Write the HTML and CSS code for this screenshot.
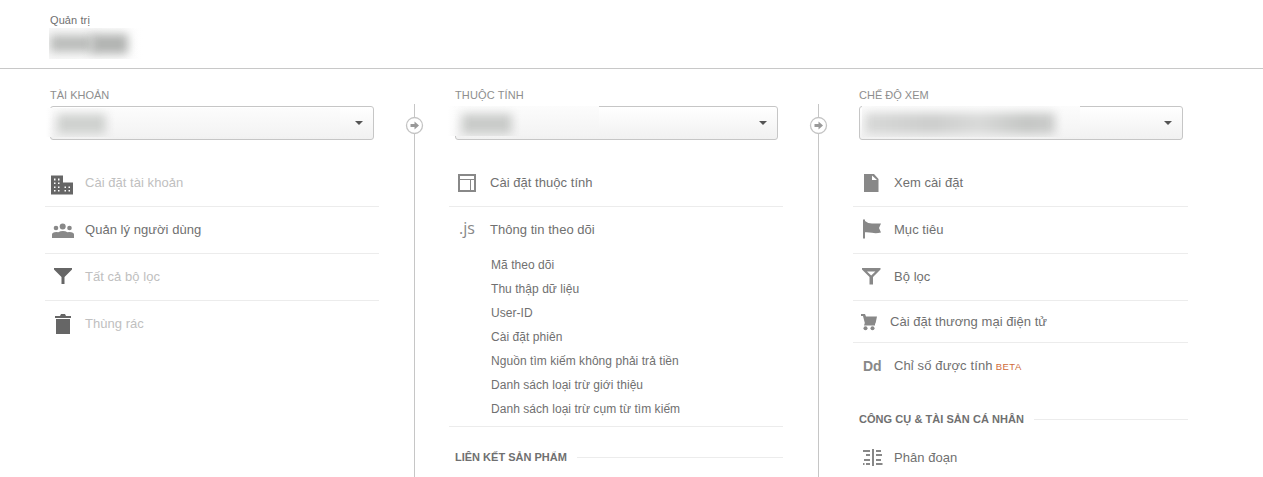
FILE: index.html
```html
<!DOCTYPE html>
<html lang="vi">
<head>
<meta charset="utf-8">
<title>Quản trị</title>
<link rel="stylesheet" href="styles.css">
</head>
<body>
<header class="top">
  <div class="crumb">Quản trị</div>
  <div class="redact redact-title"><i></i><b></b></div>
</header>
<main class="columns">
  <section class="col">
    <h2 class="label">TÀI KHOẢN</h2>
    <div class="select"><div class="redact redact-account"><i></i></div><span class="caret"></span></div>
    <ul class="rows">
      <li class="row off"><svg class="icon" viewBox="0 -1.500 24 24"><path fill="#666" fill-rule="evenodd" d="M1 3h12v7h10v12H1zM4 6v2h1.500V6zM8 6v2h1.500V6zM4 10v1.500h1.500V10zM8 10v1.500h1.500V10zM4 14v1.500h1.500V14zM8 14v1.500h1.500V14zM4 17.500v1.500h1.500v-1.500zM8 17.500v1.500h1.500v-1.500zM14.500 14v1.500H16V14zM18.500 14v1.500H20V14zM14.500 17.500v1.500H16v-1.500zM18.500 17.500v1.500H20v-1.500z"/></svg><span>Cài đặt tài khoản</span></li>
      <li class="row"><svg class="icon" viewBox="0 -1 24 24" fill="#888"><circle cx="6" cy="9" r="2.300"/><circle cx="12.700" cy="7.500" r="3"/><circle cx="19.500" cy="9" r="2.300"/><path d="M2 19v-3.500q0-2.500 4.500-2.500 1 0 1.800.3 2-1.300 4.600-1.300t4.600 1.300q.8-.3 1.800-.3 4.700 0 4.700 2.500V19z"/></svg><span>Quản lý người dùng</span></li>
      <li class="row off"><svg class="icon" viewBox="0 1 24 24" fill="#666"><path d="M4 4h18v1.500L14.500 13v7h-3v-7L4 5.500z"/></svg><span>Tất cả bộ lọc</span></li>
      <li class="row off"><svg class="icon" viewBox="0 0 24 24" fill="#666"><path d="M5 4h5l1-2h4l1 2h5v2H5zM6 7h14v15H6z"/></svg><span>Thùng rác</span></li>
    </ul>
  </section>
  <div class="divider"><svg class="go" viewBox="0 0 19 19"><circle cx="9.500" cy="9.500" r="8" fill="#fff" stroke="#c4c4c4" stroke-width="1.300"/><path fill="#999" d="M5.500 8h4V5.500l4.500 4-4.500 4V11h-4z"/></svg></div>
  <section class="col">
    <h2 class="label wide">THUỘC TÍNH</h2>
    <div class="select"><div class="redact redact-property"><i></i></div><span class="caret"></span></div>
    <ul class="rows">
      <li class="row"><svg class="icon" viewBox="0 0 24 24" fill="none" stroke="#888"><path stroke-width="2" d="M5 4h16v16H5z"/><path d="M6 8.500h14M16.500 9v10"/></svg><span>Cài đặt thuộc tính</span></li>
      <li class="row open"><span class="icon js">.js</span><span>Thông tin theo dõi</span></li>
    </ul>
    <ul class="sub">
      <li>Mã theo dõi</li><li>Thu thập dữ liệu</li><li>User-ID</li><li>Cài đặt phiên</li><li>Nguồn tìm kiếm không phải trả tiền</li><li>Danh sách loại trừ giới thiệu</li><li>Danh sách loại trừ cụm từ tìm kiếm</li>
    </ul>
    <h3 class="group group-links">LIÊN KẾT SẢN PHẨM</h3>
  </section>
  <div class="divider"><svg class="go" viewBox="0 0 19 19"><circle cx="9.500" cy="9.500" r="8" fill="#fff" stroke="#c4c4c4" stroke-width="1.300"/><path fill="#999" d="M5.500 8h4V5.500l4.500 4-4.500 4V11h-4z"/></svg></div>
  <section class="col">
    <h2 class="label">CHẾ ĐỘ XEM</h2>
    <div class="select"><div class="redact redact-view"><i></i></div><span class="caret"></span></div>
    <ul class="rows">
      <li class="row"><svg class="icon" viewBox="0 0 24 24" fill="#888"><path fill-rule="evenodd" d="M6 3h10l4.500 5v13H6zM14 4.500V9h5z"/></svg><span>Xem cài đặt</span></li>
      <li class="row"><svg class="icon" viewBox="0 0 24 24" fill="#888"><path d="M5 1.500h2v1.500q3 2.500 7 2.500h9L21 10l2 4.500q-5 1.300-9 .3-4-.8-7-.5V20.500H5z"/></svg><span>Mục tiêu</span></li>
      <li class="row"><svg class="icon" viewBox="0 1 24 24" fill="#888"><path fill-rule="evenodd" d="M4 4h18.500v1.500L15 13v7.500h-3.500V13L4 5.500zM9 7.500l4.200 4 4.200-4z"/></svg><span>Bộ lọc</span></li>
      <li class="row cart"><svg class="icon" viewBox="0 0 24 24" fill="#888"><path d="M3 4h4l1 2.500h11L17.500 13.500H17V15.500H6L6.800 13 5 6H3z"/><circle cx="7.500" cy="18.200" r="2"/><circle cx="14.500" cy="18.200" r="2"/></svg><span>Cài đặt thương mại điện tử</span></li>
      <li class="row calc"><span class="icon dd">Dd</span><span>Chỉ số được tính</span><span class="beta">BETA</span></li>
    </ul>
    <h3 class="group group-tools">CÔNG CỤ &amp; TÀI SẢN CÁ NHÂN</h3>
    <ul class="rows tools">
      <li class="row"><svg class="icon" viewBox="0 0 24 24" fill="none" stroke="#888" stroke-width="2"><path d="M15 3v17"/><path d="M5 5h7M8 9h4M6 14h6M5 18h1.500M8 18h4M18 5h5M18 9h6M18 14h5M18 18h6.500"/></svg><span>Phân đoạn</span></li>
    </ul>
  </section>
</main>
</body>
</html>
```
FILE: styles.css
```css
* { box-sizing: border-box; }
body { margin: 0; height: 477px; overflow: hidden; background: #fff; color: #707070; font-family: "Liberation Sans", Arial, sans-serif; display: flex; flex-direction: column; }
h2, h3, ul { margin: 0; padding: 0; font-weight: normal; list-style: none; }
.top { flex: none; height: 69px; border-bottom: 1px solid #c8c8c8; padding: 13px 0 0 50px; }
.crumb { font-size: 11px; line-height: 14px; letter-spacing: .1px; }
.redact { position: relative; overflow: hidden; }
.redact i, .redact b { position: absolute; filter: blur(5px); }
.redact-title { width: 95px; height: 31px; margin: 1px 0 0 -1px; background: linear-gradient(90deg, #f8f8f8, #fff); }
.redact-title i { left: 1px; top: 7px; width: 43px; height: 17px; background: #bbbdbb; }
.redact-title b { left: 42px; top: 6px; width: 37px; height: 20px; background: #b2b4b2; }
.columns { flex: 1; display: grid; grid-template-columns: 334px 70px 334px 70px 335px; padding-left: 45px; min-height: 0; }
.col { padding-top: 19px; min-width: 0; }
.label { margin-left: 5px; font-size: 11px; line-height: 14px; color: #8e8e8e; }
.label.wide { letter-spacing: .12px; }
.col + .divider + .col .label, .col + .divider + .col .select { margin-left: 6px; }
.select { position: relative; height: 34px; margin: 4px 5px 0; border: 1px solid #c6c6c6; border-radius: 3px; background: linear-gradient(#fff, #f1f1f1); }
.caret { position: absolute; right: 10px; top: 14px; border: 4px solid transparent; border-top-color: #555; border-bottom: 0; }
.select .redact { position: absolute; background: linear-gradient(#fcfcfc, #f3f3f3); }
.select .redact-account { left: -5px; top: 1px; width: 294px; height: 29px; background: linear-gradient(90deg, #fff, transparent 8px), linear-gradient(#fcfcfc, #f3f3f3); }
.redact-account i { left: 11px; top: 6px; width: 49px; height: 20px; background: #cfd1cf; }
.select .redact-property { left: -8px; top: -1px; width: 151px; height: 30px; background: linear-gradient(90deg, #fff, transparent 12px), linear-gradient(#fcfcfc, #f3f3f3); }
.redact-property i { left: 14px; top: 8px; width: 50px; height: 20px; background: #c9cbc9; }
.select .redact-view { left: 2px; top: -1px; width: 218px; height: 31px; }
.redact-view i { left: 3px; top: 7px; width: 190px; height: 21px; background: linear-gradient(90deg, #d7d8d7, #cccdcc 35%, #d8d9d8 60%, #c4c6c4 85%, #cbcccb); }
.divider { position: relative; margin-top: 35px; width: 1px; justify-self: center; background: #c6c6c6; }
.go { position: absolute; left: -9px; top: 12px; width: 19px; height: 19px; }
.rows { margin-top: 20px; }
.row { display: flex; align-items: center; height: 47px; border-bottom: 1px solid #ececec; font-size: 13px; line-height: 16px; letter-spacing: .04px; padding: 0 0 1px 5px; white-space: nowrap; }
.row:last-child { border-bottom-color: transparent; }
.icon { flex: none; width: 24px; height: 24px; margin-right: 11px; overflow: visible; }
.col + .divider + .col .icon { margin-right: 12px; }
.off { color: #c0c0c0; }
.js { font: 16px/21px "Open Sans", sans-serif; letter-spacing: 0; color: #888; padding-left: 5px; }
.dd { font-size: 14px; line-height: 24px; font-weight: bold; color: #888; padding-left: 5px; }
.sub { margin-top: -1px; padding: 0 0 5px 42px; border-bottom: 1px solid #ececec; font-size: 12px; line-height: 24px; letter-spacing: .05px; }
.row.cart { height: 42px; padding-bottom: 0; }
.col + .divider + .col .cart .icon { margin-right: 8px; }
.cart span { padding-top: 1px; }
.row.calc { height: 46px; padding-bottom: 0; letter-spacing: .12px; }
.calc .dd { letter-spacing: 0; }
.row .beta { color: #cf6b39; font-size: 9.5px; letter-spacing: .5px; margin-left: 3px; padding-top: 2px; }
.group { display: flex; align-items: center; gap: 10px; margin-left: 6px; font-size: 11px; line-height: 14px; font-weight: bold; white-space: nowrap; }
.group::after { content: ""; flex: 1; height: 1px; background: #ececec; }
.group-links { margin-top: 23px; }
.group-tools { margin-top: 23px; letter-spacing: .05px; }
.tools { margin-top: 9px; }
```
